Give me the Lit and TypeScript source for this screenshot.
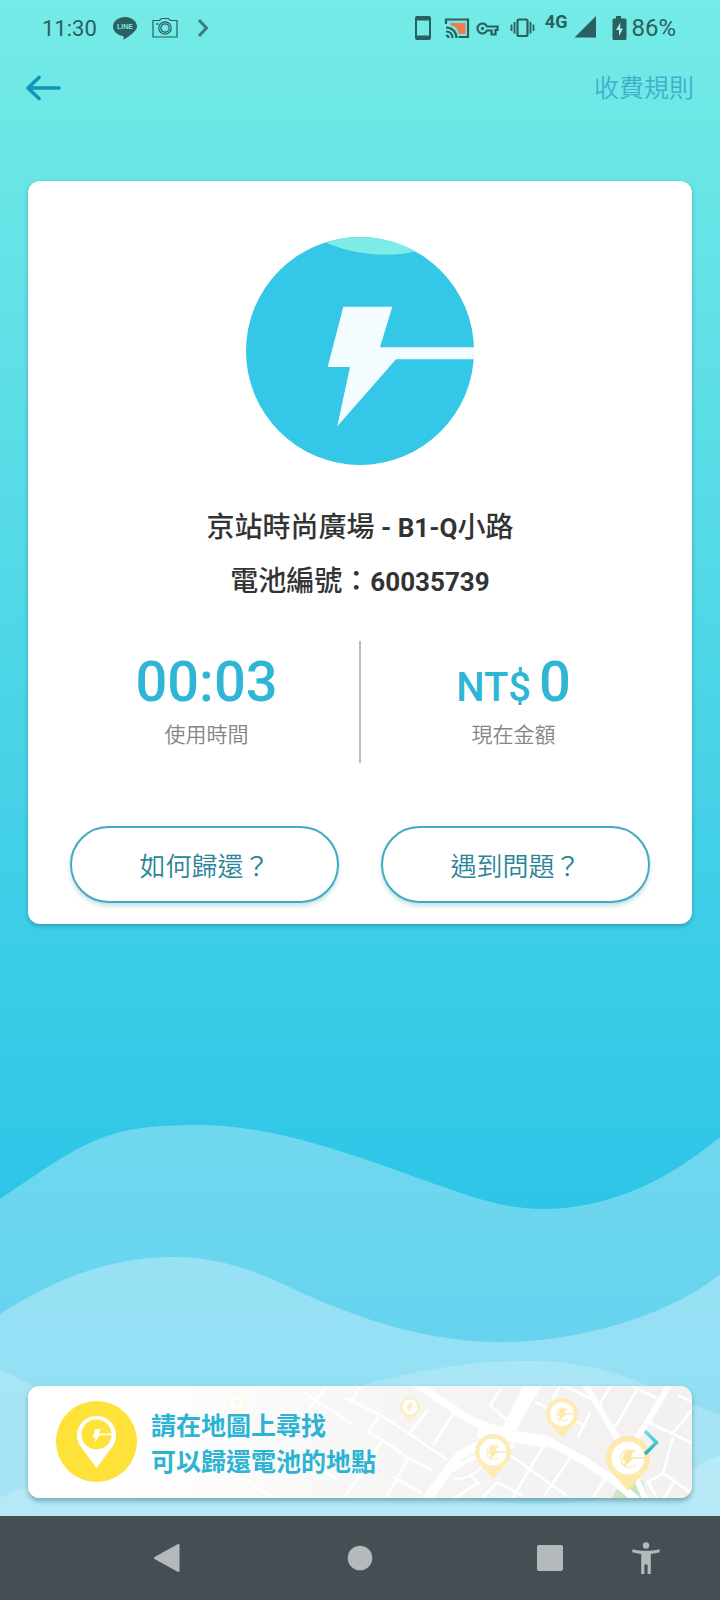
import { LitElement, html, svg, css } from "lit";
import { customElement, property } from "lit/decorators.js";

@customElement("status-bar")
class StatusBar extends LitElement {
  @property() time = "";
  @property() battery = "";

  static styles = css`
    :host {
      display: flex;
      align-items: center;
      justify-content: space-between;
      height: 54px;
      padding: 2px 44px 0 42px;
      box-sizing: border-box;
      color: #2b5f60;
      font-size: 24px;
    }
    .group {
      display: flex;
      align-items: center;
    }
    .time {
      font-size: 22px;
      margin-right: 12px;
    }
    .net {
      font-size: 18px;
      font-weight: 700;
      line-height: 20px;
      align-self: flex-start;
      padding: 0 4px;
    }
    .word {
      font: 700 7px "Liberation Sans", sans-serif;
    }
    svg {
      display: block;
      flex: none;
    }
  `;

  render() {
    return html`
      <div class="group">
        <span class="time">${this.time}</span>
        <svg width="37" height="32" viewBox="0 0 37 32" aria-hidden="true">
          <path d="M16 5C9.400 5 4 9.300 4 14.600c0 4.700 4.200 8.700 9.900 9.400 1 .2.8 1.500.6 3.500 2-.8 6.500-3.600 9.600-6.800 2.600-2 3.900-4 3.900-6.100C28 9.300 22.600 5 16 5z" fill="currentColor" />
          <text class="word" x="16" y="17" text-anchor="middle" fill="#74ebe6">LINE</text>
        </svg>
        <svg width="48" height="32" viewBox="0 0 48 32" fill="none" stroke="currentColor" stroke-width="1.200" aria-hidden="true">
          <path d="M7 8.500h6.500l2-2h7l2 2H31V25H7z" />
          <circle cx="19" cy="16" r="6.200" />
          <circle cx="19" cy="16" r="4.200" />
          <path d="M10 12h3" />
        </svg>
        <svg width="22" height="32" viewBox="0 0 22 32" fill="none" stroke="#3f7b7c" stroke-width="3" aria-hidden="true">
          <path d="M5 8l7.500 8-7.500 8" />
        </svg>
      </div>
      <div class="group">
        <svg width="28" height="32" viewBox="0 0 28 32" aria-hidden="true">
          <path fill="currentColor" fill-rule="evenodd" d="M8 4h12a2 2 0 0 1 2 2v20a2 2 0 0 1-2 2H8a2 2 0 0 1-2-2V6a2 2 0 0 1 2-2zm0 4.500v15h12v-15z" />
        </svg>
        <svg width="35" height="32" viewBox="0 0 35 32" fill="none" stroke="currentColor" stroke-width="2.200" aria-hidden="true">
          <path d="M9 12V7.500h22V25H21.500" />
          <path d="M13.500 11h15v11h-7c0-5-3.500-8-8-8.500z" fill="#f27b4f" stroke="none" />
          <path d="M9 15.500c6 0 10.500 4.500 10.500 10.500M9 19.500c3.800 0 6.500 2.800 6.500 6.500M9 23.500c1.500 0 2.500 1 2.500 2.500" />
        </svg>
        <svg width="32" height="32" viewBox="0 0 32 32" fill="none" stroke="currentColor" stroke-width="2.200" aria-hidden="true">
          <path d="M15 14.500h10.500v3.500h-2v4.500h-4V18.500H15a5 5 0 1 1 0-4z" />
          <circle cx="10.500" cy="16.500" r="1.200" fill="currentColor" stroke-width="1" />
        </svg>
        <svg width="37" height="32" viewBox="0 0 37 32" fill="none" stroke="currentColor" stroke-width="2.200" aria-hidden="true">
          <rect x="13.500" y="7.500" width="10" height="16.500" rx="1.500" />
          <path d="M10.500 10v11.500M7.500 12.500v6.500M26.500 10v11.500M29.500 12.500v6.500" stroke-width="1.800" />
        </svg>
        <span class="net">4G</span>
        <svg width="36" height="32" viewBox="0 0 36 32" aria-hidden="true">
          <path d="M25 4v21.500H3.500z" fill="currentColor" />
        </svg>
        <svg width="24" height="32" viewBox="0 0 24 32" aria-hidden="true">
          <path d="M9 4h5v2.500h4a1.500 1.500 0 0 1 1.500 1.500v18.500a1.500 1.500 0 0 1-1.500 1.500H7a1.500 1.500 0 0 1-1.500-1.500V8A1.500 1.500 0 0 1 7 6.500h2z" fill="currentColor" />
          <path d="M13.500 10.500l-4.500 7.500h3v6l4-7.500h-3z" fill="#9ff3ef" />
        </svg>
        <span>${this.battery}</span>
      </div>
    `;
  }
}

@customElement("map-banner")
class MapBanner extends LitElement {
  static styles = css`
    :host {
      display: block;
    }
    .banner {
      display: grid;
      width: 100%;
      min-height: 112px;
      border-radius: 12px;
      overflow: hidden;
      background: #fff;
      box-shadow: 0 3px 5px rgba(30, 90, 100, 0.45);
      text-decoration: none;
      color: #2db3d3;
    }
    .map,
    .row {
      grid-area: 1 / 1;
    }
    .map {
      width: 100%;
      height: 112px;
      display: block;
    }
    .row {
      display: flex;
      align-items: center;
      gap: 14px;
      padding: 0 33px 2px 28px;
    }
    .text {
      flex: 1;
      padding-top: 8px;
      font-size: 25px;
      font-weight: 700;
      line-height: 36px;
    }
    .row svg {
      flex: none;
      display: block;
    }
  `;

  private pin(x: number, y: number, r: number, opacity: number) {
    return svg`
      <g transform="translate(${x} ${y}) scale(${r / 20})" opacity=${opacity}>
        <path d="M-17 10.500A20 20 0 1 1 17 10.500L0 30z" fill="#fde8a6" />
        <circle r="15" fill="#fff" />
        <path d="M7-5A8 8 0 1 0 7 6" fill="none" stroke="#fdf0c8" stroke-width="2" />
        <path d="M-2-7h7L3-1h12v1.500H5L-4 9l1.500-7h-3z" fill="#fde4a0" />
      </g>`;
  }

  render() {
    return html`
      <a class="banner" href="#map">
        <svg class="map" viewBox="0 0 664 112" preserveAspectRatio="xMaxYMid slice" aria-hidden="true">
          <defs>
            <linearGradient id="fade">
              <stop offset="0" stop-color="#fff" />
              <stop offset="0.150" stop-color="#fff" />
              <stop offset="0.600" stop-color="#fff" stop-opacity="0.250" />
              <stop offset="1" stop-color="#fff" stop-opacity="0" />
            </linearGradient>
          </defs>
          <rect width="664" height="112" fill="#f2f1f0" />
          <path d="M590 101l10-4 14-3 6 18h-36z" fill="#c9e4bd" />
          <g fill="none" stroke="#fff">
            <g stroke-width="2.600">
              <path d="M332 0l-8 14M315 11l37 18 27 17 40 28M352 29l-12 17 14 8 26 18 25 12M400 24l-20 25M419 16l30 21M429 22l-24 37M379 74l-20 37M354 54l-25 40M365 91l29 16" />
              <path d="M100 24l120 72 26 16M275 6l49 32M300-2l-22 30M258 60l52 34M329 94l-14 18M310 76l24 16" />
              <path d="M472 4l-10 15M462 20l17 14M507 16l42 20 8 4M562 27l-12 24M532 0l-8 14M532-2l34 16M609 4l-22 37M595-4l34 16M572 18l12-20" />
              <path d="M622 37l42 20M650 9l14 7M664 24l-20 24M645 51l-10 36-16 10M635 87l28 20M619 94l10 18M646 96l-10 16" />
              <path d="M515 61l-20 33-10 18M478 66l61 44M542 72l-26 38M579 91l-14 20M442 89l8 8-24 15M470 96l-16 16M470 96l24 14" />
            </g>
            <path d="M387-3l55 37 40 15 40 7 33 18 30 20 24 20" stroke-width="8" />
            <path d="M511-4l-29 47-50 26-35 46" stroke-width="9" />
            <path d="M505-4l-24 48" stroke-width="14" />
            <path d="M450 46l32 4 38 6" stroke-width="12" />
            <path d="M556-4l33 56 20 42 9 20" stroke-width="6" />
            <path d="M643-4l-24 41-30 45" stroke-width="6" />
            <path d="M403 106c16-24 50-42 84-46" stroke-width="4" />
            <path d="M424 92c12 3 24-4 32-14" stroke-width="2" />
          </g>
          ${this.pin(465, 66, 18, 1)} ${this.pin(534, 28, 16, 1)}
          ${this.pin(600, 72, 22, 1)} ${this.pin(382, 21, 10, 0.9)}
          ${this.pin(209, 17, 9, 0.9)}
          <rect width="664" height="112" fill="url(#fade)" />
        </svg>
        <div class="row">
          <svg width="81" height="81" viewBox="0 0 81 81" aria-hidden="true">
            <circle cx="40.500" cy="40.500" r="40.500" fill="#fee139" />
            <path d="M23.500 44A19.500 19.500 0 1 1 57.500 44L40.500 67z" fill="#fff" />
            <circle cx="40.500" cy="33.500" r="15" fill="#fee139" />
            <path d="M39.500 28h5l-1.500 4.500h12.500v1.800H43.500L38 42.500l1.500-6h-3z" fill="#fff" />
          </svg>
          <div class="text">請在地圖上尋找<br />可以歸還電池的地點</div>
          <svg width="17" height="28" viewBox="0 0 17 28" aria-hidden="true">
            <defs>
              <linearGradient id="chev" x2="0" y2="1">
                <stop offset="0" stop-color="#6fe0e2" />
                <stop offset="1" stop-color="#25abc6" />
              </linearGradient>
            </defs>
            <path d="M3 4l11.500 11.500L3 27" fill="none" stroke="url(#chev)" stroke-width="3.400" />
          </svg>
        </div>
      </a>
    `;
  }
}

@customElement("system-nav")
class SystemNav extends LitElement {
  static styles = css`
    :host {
      display: grid;
      grid-template-columns: 193fr 190fr 96fr 102fr;
      align-items: center;
      height: 84px;
      padding-left: 139px;
      background: #454e53;
      color: #b4babb;
    }
    button {
      display: grid;
      place-items: center;
      width: 56px;
      height: 56px;
      padding: 0;
      border: 0;
      background: none;
      color: inherit;
    }
  `;

  render() {
    return html`
      <button aria-label="返回">
        <svg width="28" height="32" viewBox="0 0 28 32">
          <path d="M25.500 3v26L2 16z" fill="currentColor" stroke="currentColor" stroke-width="2" stroke-linejoin="round" />
        </svg>
      </button>
      <button aria-label="主畫面">
        <svg width="28" height="32" viewBox="0 0 28 32"><circle cx="14" cy="16" r="12.300" fill="currentColor" /></svg>
      </button>
      <button aria-label="最近使用">
        <svg width="28" height="32" viewBox="0 0 28 32"><rect x="1" y="3" width="26" height="26" rx="2" fill="currentColor" /></svg>
      </button>
      <button aria-label="無障礙">
        <svg width="28" height="32" viewBox="0 0 28 32" fill="currentColor">
          <circle cx="14" cy="3.500" r="3.200" />
          <path d="M.5 7.200C9 9.300 19 9.300 27.500 7.200l.3 3.100c-3 .8-6 1.300-9 1.600V32h-3.200v-9.500h-3.200V32H9.200V11.900c-3-.3-6-.8-9-1.600z" />
        </svg>
      </button>
    `;
  }
}

@customElement("app-root")
class AppRoot extends LitElement {
  static styles = css`
    :host {
      display: block;
      font-family: Roboto, "Noto Sans CJK TC", sans-serif;
    }
    .page {
      display: flex;
      flex-direction: column;
      min-height: 100vh;
    }
    .screen {
      flex: 1;
      display: grid;
      background: linear-gradient(#74ebe6, #1bbbe8);
    }
    .waves,
    .content {
      grid-area: 1 / 1;
      min-width: 0;
    }
    .waves {
      align-self: end;
      width: 100%;
      height: 416px;
      display: block;
    }
    .content {
      display: flex;
      flex-direction: column;
    }
    .toolbar {
      display: flex;
      align-items: center;
      justify-content: space-between;
      height: 70px;
      padding: 0 26px;
    }
    .back {
      padding: 0;
      border: 0;
      background: none;
      display: block;
    }
    .back svg,
    .logo {
      display: block;
    }
    .rules {
      font-size: 25px;
      font-weight: 350;
      line-height: 36px;
      color: #3eb0c8;
      text-decoration: none;
    }
    .card {
      margin: 57px 28px 40px;
      padding: 56px 0 21px;
      border-radius: 12px;
      background: #fff;
      box-shadow: 0 2px 4px rgba(20, 90, 110, 0.4);
    }
    .logo {
      margin: 0 auto 36px;
    }
    .place {
      margin: 0;
      text-align: center;
      font-size: 28px;
      font-weight: 500;
      line-height: 54px;
      color: #333;
    }
    .latin {
      font-size: 26px;
      font-weight: 700;
      line-height: 26px;
    }
    .stats {
      display: grid;
      grid-template-columns: 1fr 2px 1fr;
      margin: 32px 26px 63px;
      text-align: center;
    }
    .rule {
      background: #bdbdbd;
    }
    .stat {
      display: flex;
      flex-direction: column;
      height: 122px;
      padding-top: 8px;
      box-sizing: border-box;
    }
    .value {
      height: 66px;
      font-size: 56px;
      font-weight: 500;
      line-height: 66px;
      color: #2fb5d5;
    }
    .unit {
      font-size: 40px;
      line-height: 40px;
      margin-right: 8px;
    }
    .label {
      font-size: 21px;
      font-weight: 350;
      line-height: 40px;
      color: #858585;
    }
    .actions {
      display: grid;
      grid-template-columns: 1fr 1fr;
      gap: 42px;
      padding: 0 42px;
    }
    .action {
      height: 77px;
      padding: 0;
      border: 2px solid #43a9c1;
      border-radius: 39px;
      background: #fff;
      box-shadow: 0 3px 4px rgba(60, 150, 180, 0.3);
      color: #2b8499;
      font: inherit;
      font-size: 26px;
      font-weight: 350;
    }
    .banner {
      margin: auto 28px 18px;
    }
  `;

  render() {
    return html`
      <div class="page">
        <div class="screen">
          <svg class="waves" viewBox="0 1100 720 416" preserveAspectRatio="none" fill="#fff" aria-hidden="true">
            <path opacity="0.300" d="M0 1199C40 1172 75 1146 110 1135C135 1127 165 1125 197 1125C260 1125 320 1144 376 1163C405 1173 428 1182 450 1189C480 1200 510 1209 542 1209C610 1209 668 1180 720 1137V1516H0z" />
            <path opacity="0.300" d="M0 1314C50 1282 105 1257 174 1257C220 1257 258 1272 294 1289C360 1320 430 1342 500 1342C585 1342 675 1312 720 1274V1516H0z" />
            <path opacity="0.200" d="M0 1369C70 1405 120 1430 190 1430C260 1430 310 1402 360 1386C420 1369 470 1361 528 1361C610 1361 640 1385 720 1415V1516H0z" />
            <path opacity="0.200" d="M0 1498C60 1472 110 1450 190 1450C330 1450 400 1504 542 1504C610 1504 660 1485 720 1455V1516H0z" />
          </svg>
          <div class="content">
            <status-bar time="11:30" battery="86%"></status-bar>
            <div class="toolbar">
              <button class="back" aria-label="返回">
                <svg width="36" height="28" viewBox="0 0 36 28" fill="none" stroke="#0f95b5" stroke-width="3.600" stroke-linecap="round" stroke-linejoin="round">
                  <path d="M33 13H2M13 2.500L2 13 13 23.500" />
                </svg>
              </button>
              <a class="rules" href="#rules">收費規則</a>
            </div>
            <section class="card">
              <svg class="logo" width="228" height="228" viewBox="0 0 228 228" aria-hidden="true">
                <defs><clipPath id="disc"><circle cx="114" cy="114" r="114" /></clipPath></defs>
                <g clip-path="url(#disc)">
                  <rect width="228" height="228" fill="#35c7e8" />
                  <path d="M76 4C98 14 135 24 175 13V-2H76z" fill="#7debe6" />
                  <path d="M97.300 69.700h49L134 110.300h94v12h-78L91.300 189.300 104 130H81.700z" fill="#f3fdff" />
                </g>
              </svg>
              <p class="place">京站時尚廣場<span class="latin"> - B1-Q</span>小路</p>
              <p class="place">電池編號：<span class="latin">60035739</span></p>
              <div class="stats">
                <div class="stat">
                  <span class="value">00:03</span>
                  <span class="label">使用時間</span>
                </div>
                <div class="rule"></div>
                <div class="stat">
                  <span class="value"><span class="unit">NT$</span>0</span>
                  <span class="label">現在金額</span>
                </div>
              </div>
              <div class="actions">
                <button class="action">如何歸還？</button>
                <button class="action">遇到問題？</button>
              </div>
            </section>
            <map-banner class="banner"></map-banner>
          </div>
        </div>
        <system-nav></system-nav>
      </div>
    `;
  }
}
